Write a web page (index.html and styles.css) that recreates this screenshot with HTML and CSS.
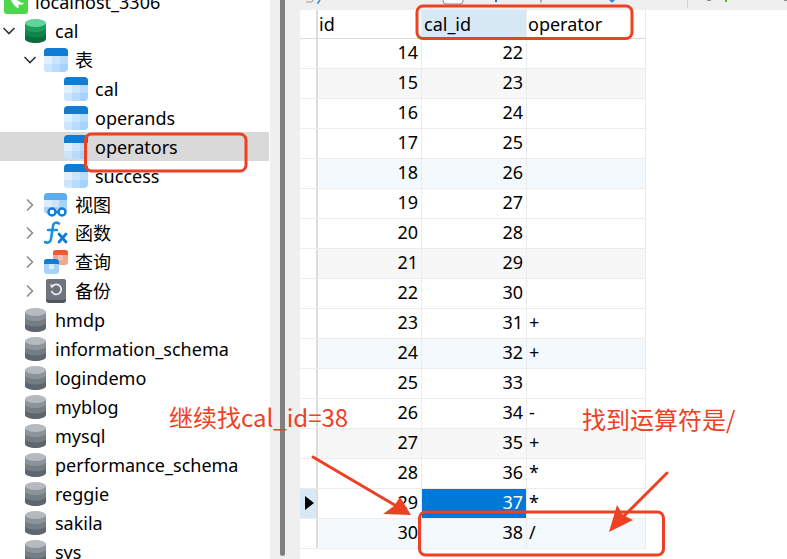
FILE: index.html
```html
<!DOCTYPE html>
<html lang="zh-CN">
<head>
<meta charset="utf-8">
<title>cal.operators</title>
<link rel="stylesheet" href="styles.css">
</head>
<body>
<svg class="defs" width="0" height="0" aria-hidden="true">
  <defs>
    <symbol id="tbl" viewBox="0 0 24 24">
      <rect width="24" height="24" rx="4" fill="#a6d3fb"/>
      <rect x="0" y="8" width="8" height="8" fill="#e1f0fe"/>
      <rect x="8" y="8" width="8" height="8" fill="#cbe5fd"/>
      <rect x="16" y="8" width="8" height="8" fill="#b9dcfc"/>
      <rect x="8" y="16" width="8" height="8" fill="#b9dcfc"/>
      <path d="M0 8V4a4 4 0 0 1 4-4h16a4 4 0 0 1 4 4v4z" fill="#0f7cd6"/>
      <path d="M0 16h8v8H4a4 4 0 0 1-4-4z" fill="#cbe5fd"/>
    </symbol>
    <symbol id="dbg" viewBox="0 0 21 24">
      <path d="M0 4v16c0 2.200 4.700 4 10.500 4S21 22.200 21 20V4z" fill="#5d666e"/>
      <path d="M0 4v10.500c0 2.200 4.700 4 10.500 4S21 16.700 21 14.500V4z" fill="#747d85"/>
      <path d="M0 4v5c0 2.200 4.700 4 10.500 4S21 11.200 21 9V4z" fill="#8b939b"/>
      <ellipse cx="10.500" cy="4" rx="10.500" ry="4" fill="#b4bac0"/>
    </symbol>
    <symbol id="dbc" viewBox="0 0 21 24">
      <path d="M0 4v16c0 2.200 4.700 4 10.500 4S21 22.200 21 20V4z" fill="#0b6b3a"/>
      <path d="M0 4v10.500c0 2.200 4.700 4 10.500 4S21 16.700 21 14.500V4z" fill="#10854a"/>
      <path d="M0 4v5c0 2.200 4.700 4 10.500 4S21 11.200 21 9V4z" fill="#1d9e5f"/>
      <ellipse cx="10.500" cy="4" rx="10.500" ry="4" fill="#62d39b"/>
    </symbol>
    <symbol id="chd" viewBox="0 0 14 14"><path d="M1.500 4l5.500 5.500L12.500 4" fill="none" stroke="#333" stroke-width="1.600"/></symbol>
    <symbol id="chr" viewBox="0 0 14 14"><path d="M4 1.500L9.500 7 4 12.500" fill="none" stroke="#8c8c8c" stroke-width="1.600"/></symbol>
  </defs>
</svg>

<main class="app">
  <nav class="tree">
    <div class="row lv0">
      <span class="chev"></span>
      <svg class="ic host" viewBox="0 0 24 24"><rect width="24" height="24" rx="3" fill="#4cd64a"/><path d="M6 0c1 6 4 8 7 10 2 1.500 4 3 7 3-1 2-4 2-6 1.500 1 1.500 1 3 0 4-2-1.500-4-3-5-5C7 11 5 6 4 0z" fill="#fff"/></svg>
      <span class="tx">localhost_3306</span>
    </div>
    <div class="row lv0">
      <svg class="chev"><use href="#chd"/></svg>
      <svg class="ic db"><use href="#dbc"/></svg>
      <span class="tx">cal</span>
    </div>
    <div class="row lv1">
      <svg class="chev"><use href="#chd"/></svg>
      <svg class="ic"><use href="#tbl"/></svg>
      <span class="tx">表</span>
    </div>
    <div class="row lv2"><svg class="ic"><use href="#tbl"/></svg><span class="tx">cal</span></div>
    <div class="row lv2"><svg class="ic"><use href="#tbl"/></svg><span class="tx">operands</span></div>
    <div class="row lv2 sel"><svg class="ic"><use href="#tbl"/></svg><span class="tx">operators</span></div>
    <div class="row lv2"><svg class="ic"><use href="#tbl"/></svg><span class="tx">success</span></div>
    <div class="row lv1">
      <svg class="chev"><use href="#chr"/></svg>
      <svg class="ic" viewBox="0 0 24 24">
        <rect width="23" height="21" rx="4" fill="#a6d3fb"/>
        <path d="M0 7V4a4 4 0 0 1 4-4h15a4 4 0 0 1 4 4v3z" fill="#5aaef0"/>
        <rect x="0" y="7" width="8" height="7" fill="#dceefe"/>
        <rect x="8" y="7" width="7" height="7" fill="#cbe5fd"/>
        <circle cx="8" cy="19" r="3.500" fill="#fff" stroke="#0f7cd6" stroke-width="2.400"/>
        <circle cx="18" cy="19" r="3.500" fill="#fff" stroke="#0f7cd6" stroke-width="2.400"/>
        <path d="M11 19h4" stroke="#0f7cd6" stroke-width="2"/>
      </svg>
      <span class="tx">视图</span>
    </div>
    <div class="row lv1">
      <svg class="chev"><use href="#chr"/></svg>
      <svg class="ic" viewBox="0 0 24 24">
        <path d="M15 2.500C12 .500 9.500 2 9 5L7 18c-.5 3-3 4.500-6 3" fill="none" stroke="#1a8fe3" stroke-width="2.600" stroke-linecap="round"/>
        <path d="M4 9h9" stroke="#1a8fe3" stroke-width="2.400" stroke-linecap="round"/>
        <path d="M15 13l7 8M22 13l-7 8" stroke="#0f7cd6" stroke-width="2.800" stroke-linecap="round"/>
      </svg>
      <span class="tx">函数</span>
    </div>
    <div class="row lv1">
      <svg class="chev"><use href="#chr"/></svg>
      <svg class="ic" viewBox="0 0 24 24">
        <rect x="9" y="0" width="15" height="15" rx="3" fill="#f7a58c"/>
        <path d="M9 5V3a3 3 0 0 1 3-3h9a3 3 0 0 1 3 3v2z" fill="#ef5a34"/>
        <rect x="14" y="5" width="5" height="5" fill="#fbc4b2"/>
        <rect x="0" y="9" width="15" height="15" rx="3" fill="#fff"/>
        <rect x="0" y="9" width="15" height="15" rx="3" fill="#a6d3fb"/>
        <path d="M0 14v-2a3 3 0 0 1 3-3h9a3 3 0 0 1 3 3v2z" fill="#0f7cd6"/>
        <rect x="5" y="14" width="5" height="5" fill="#dceefe"/>
      </svg>
      <span class="tx">查询</span>
    </div>
    <div class="row lv1">
      <svg class="chev"><use href="#chr"/></svg>
      <svg class="ic" viewBox="0 0 24 24">
        <rect x="2" y="0" width="20" height="24" rx="3" fill="#4e555c"/>
        <rect x="2" y="0" width="20" height="21" rx="3" fill="#6d747b"/>
        <path d="M8.500 7A5 5 0 1 1 7.500 12" fill="none" stroke="#e9ebed" stroke-width="1.900"/>
        <path d="M6 5.500l5 .5-3.500 3.500z" fill="#e9ebed"/>
      </svg>
      <span class="tx">备份</span>
    </div>
    <div class="row lv0"><span class="chev"></span><svg class="ic db"><use href="#dbg"/></svg><span class="tx">hmdp</span></div>
    <div class="row lv0"><span class="chev"></span><svg class="ic db"><use href="#dbg"/></svg><span class="tx">information_schema</span></div>
    <div class="row lv0"><span class="chev"></span><svg class="ic db"><use href="#dbg"/></svg><span class="tx">logindemo</span></div>
    <div class="row lv0"><span class="chev"></span><svg class="ic db"><use href="#dbg"/></svg><span class="tx">myblog</span></div>
    <div class="row lv0"><span class="chev"></span><svg class="ic db"><use href="#dbg"/></svg><span class="tx">mysql</span></div>
    <div class="row lv0"><span class="chev"></span><svg class="ic db"><use href="#dbg"/></svg><span class="tx">performance_schema</span></div>
    <div class="row lv0"><span class="chev"></span><svg class="ic db"><use href="#dbg"/></svg><span class="tx">reggie</span></div>
    <div class="row lv0"><span class="chev"></span><svg class="ic db"><use href="#dbg"/></svg><span class="tx">sakila</span></div>
    <div class="row lv0"><span class="chev"></span><svg class="ic db"><use href="#dbg"/></svg><span class="tx">sys</span></div>
  </nav>

  <div class="gutter"><div class="bar"></div></div>

  <section class="pane">
    <svg class="toolbar" viewBox="0 0 487 10" aria-hidden="true">
      <path d="M13 0l-1 2h-6" stroke="#9a9a9a" fill="none"/>
      <path d="M20 0l-2 3-1 0" stroke="#2a8fe0" stroke-width="1.500" fill="none"/>
      <path d="M143 0v1a3 3 0 0 0 3 3h14a3 3 0 0 0 3-3V0" stroke="#8a8a8a" fill="#fafafa"/>
      <rect x="195" y="0" width="2" height="2" fill="#1b6fb8"/>
      <path d="M240 0h2l-1 4z" fill="#999"/>
      <path d="M309 0h6l-3 3z" fill="#2a8fe0"/>
      <rect x="387" y="0" width="1" height="8" fill="#d4d4d4"/>
      <rect x="407" y="0" width="4" height="1" fill="#8f8f8f"/>
      <rect x="425" y="0" width="2" height="2" fill="#4cc414"/>
      <rect x="484" y="0" width="3" height="1" fill="#8f8f8f"/>
    </svg>
    <div class="grid">
      <div class="tr head"><div class="ind"></div><div class="td h">id</div><div class="td h on">cal_id</div><div class="td h">operator</div></div>
      <div class="tr"><div class="ind"></div><div class="td n">14</div><div class="td n">22</div><div class="td"></div></div>
      <div class="tr gray"><div class="ind"></div><div class="td n">15</div><div class="td n">23</div><div class="td"></div></div>
      <div class="tr"><div class="ind"></div><div class="td n">16</div><div class="td n">24</div><div class="td"></div></div>
      <div class="tr"><div class="ind"></div><div class="td n">17</div><div class="td n">25</div><div class="td"></div></div>
      <div class="tr blue"><div class="ind"></div><div class="td n">18</div><div class="td n">26</div><div class="td"></div></div>
      <div class="tr"><div class="ind"></div><div class="td n">19</div><div class="td n">27</div><div class="td"></div></div>
      <div class="tr"><div class="ind"></div><div class="td n">20</div><div class="td n">28</div><div class="td"></div></div>
      <div class="tr gray"><div class="ind"></div><div class="td n">21</div><div class="td n">29</div><div class="td"></div></div>
      <div class="tr"><div class="ind"></div><div class="td n">22</div><div class="td n">30</div><div class="td"></div></div>
      <div class="tr"><div class="ind"></div><div class="td n">23</div><div class="td n">31</div><div class="td">+</div></div>
      <div class="tr blue"><div class="ind"></div><div class="td n">24</div><div class="td n">32</div><div class="td">+</div></div>
      <div class="tr"><div class="ind"></div><div class="td n">25</div><div class="td n">33</div><div class="td"></div></div>
      <div class="tr"><div class="ind"></div><div class="td n">26</div><div class="td n">34</div><div class="td">-</div></div>
      <div class="tr gray"><div class="ind"></div><div class="td n">27</div><div class="td n">35</div><div class="td">+</div></div>
      <div class="tr"><div class="ind"></div><div class="td n">28</div><div class="td n">36</div><div class="td">*</div></div>
      <div class="tr"><div class="ind cur"></div><div class="td n">29</div><div class="td n act">37</div><div class="td">*</div></div>
      <div class="tr blue"><div class="ind"></div><div class="td n">30</div><div class="td n">38</div><div class="td">/</div></div>
    </div>
  </section>
</main>

<svg class="marks" viewBox="0 0 787 559" aria-hidden="true">
  <g fill="none" stroke="#ee4023" stroke-width="3">
    <rect x="417" y="6" width="215" height="32.500" rx="6"/>
    <rect x="85.500" y="134" width="160.500" height="37" rx="6"/>
    <rect x="419.500" y="512" width="244" height="43" rx="6"/>
    <path d="M313 457L398 507" stroke-linecap="round"/>
    <path d="M667 473L620 520" stroke-linecap="round"/>
  </g>
  <path d="M411 515l-28-1 11-8 6-9z" fill="#ee4023"/>
  <path d="M609 532l8-27 6 10 10 5z" fill="#ee4023"/>
</svg>
<div class="note note-a">继续找cal_id=38</div>
<div class="note note-b">找到运算符是/</div>
</body>
</html>
```
FILE: styles.css
```css
* { box-sizing: border-box; }
html, body { margin: 0; padding: 0; width: 787px; height: 559px; overflow: hidden; background: #fff; }
body { position: relative; font-family: "Noto Sans", "Noto Sans CJK SC", sans-serif; color: #000; }
.defs { position: absolute; }

.app { display: flex; height: 559px; }

.tree { width: 270px; flex: none; margin-top: -12.5px; font-size: 18px; }
.row { display: flex; align-items: center; height: 28.95px; white-space: nowrap; }
.row.sel { background: #d9d9d9; margin-right: 1px; }
.lv0 { padding-left: 4px; }
.lv1 { padding-left: 24px; }
.lv2 { padding-left: 64px; }
.chev { width: 14px; height: 14px; flex: none; margin-left: -2px; margin-right: 9px; }
.lv1 .chev { margin-left: -1px; margin-right: 9px; }
.ic { width: 24px; height: 24px; flex: none; }
.lv0 .ic { width: 21px; }
.lv1 .ic { margin-left: -2px; }
.tx { margin-left: 7px; line-height: 24px; }
.lv0 .tx { margin-left: 9px; }
.lv2 .ic { margin-left: 0; }
.lv0 .ic.host { width: 24px; margin-left: -21px; }
.lv0 .ic.host + .tx { margin-left: 7px; }

.gutter { width: 30px; flex: none; background: #efefef; padding-left: 10px; }
.bar { width: 5px; height: 556px; background: #808080; border-radius: 0 0 3px 3px; }

.pane { flex: 1; display: flex; flex-direction: column; min-width: 0; }
.toolbar { display: block; width: 487px; height: 10px; background: #efefef; flex: none; }
.grid { width: 346px; font-size: 18px; }
.tr { display: grid; grid-template-columns: 18px 104px 105px 119px; height: 30px; border-bottom: 1px solid #ececec; }
.tr.head { height: 29px; border-bottom-color: #dcdcdc; }
.tr.gray .td { background: #f7f7f7; }
.tr.blue .td { background: #f4f9fd; }
.ind { border-right: 2px solid #dcdcdc; position: relative; }
.ind.cur { background: #d8e9f6; }
.ind.cur::after { content: ""; position: absolute; left: 5px; top: 7px; border-left: 9px solid #000; border-top: 7.500px solid transparent; border-bottom: 7.500px solid transparent; }
.td { border-right: 1px solid #ececec; padding: 0 2px; line-height: 27px; white-space: nowrap; }
.td.h { line-height: 28px; padding-left: 1px; }
.td.on { background: #d8e9f6; padding-left: 2px; }
.td.n { text-align: right; padding-right: 3px; }
.tr .td.act { background: #0078d7; color: #fff; }

.marks { position: absolute; left: 0; top: 0; width: 787px; height: 559px; pointer-events: none; }
.note { position: absolute; font-family: "Noto Sans CJK SC", "Noto Sans", sans-serif; font-size: 24px; line-height: 30px; color: #ee4023; white-space: nowrap; }
.note-a { left: 169px; top: 402px; }
.note-b { left: 582px; top: 404px; }
```
